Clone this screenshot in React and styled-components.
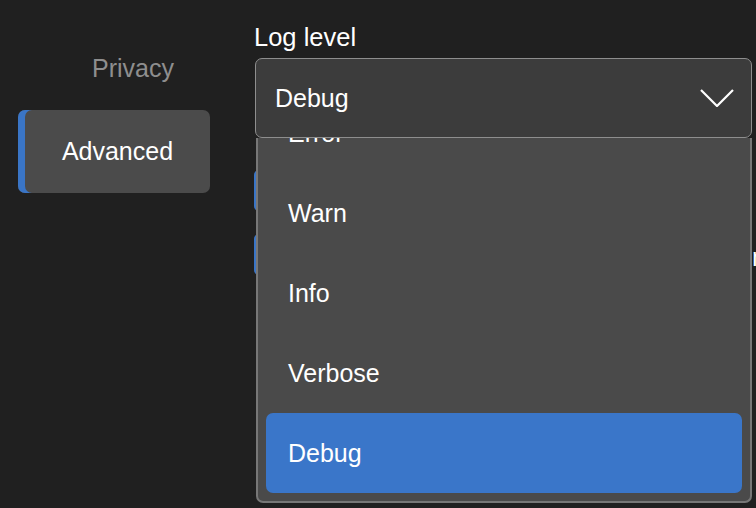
import React, { useEffect, useRef } from "react";
import styled, { createGlobalStyle } from "styled-components";

const Global = createGlobalStyle`
  html, body { margin: 0; padding: 0; background: #202020; overflow: hidden; }
  body { font-family: "Liberation Sans", Arial, Helvetica, sans-serif; color: #fff; }
`;

const Page = styled.div`
  display: flex;
  width: 756px;
  height: 508px;
  background: #202020;
  overflow: hidden;
`;

const Sidebar = styled.nav`
  display: flex;
  flex-direction: column;
  padding: 27px 0 0 18px;
  width: 192px;
  flex-shrink: 0;
`;

const NavItem = styled.div`
  height: 83px;
  display: flex;
  align-items: center;
  justify-content: center;
  box-sizing: border-box;
  font-size: 25px;
  border-radius: 7px;
  padding-left: ${(p) => (p.$active ? "7px" : "38px")};
  color: ${(p) => (p.$active ? "#ffffff" : "#8e8e8e")};
  background: ${(p) => (p.$active ? "#4b4b4b" : "transparent")};
  box-shadow: ${(p) => (p.$active ? "inset 7px 0 0 #3a75c6" : "none")};
`;

const Main = styled.main`
  flex: 1;
  display: flex;
  flex-direction: column;
  margin-left: 44px;
  margin-right: 4px;
  min-width: 0;
`;

const Label = styled.div`
  font-size: 25.5px;
  line-height: 28px;
  margin-top: 23px;
  margin-bottom: 7px;
`;

const SelectWrap = styled.div`
  position: relative;
  margin-left: 1px;
`;

const SelectBox = styled.div`
  height: 80px;
  box-sizing: border-box;
  display: flex;
  align-items: center;
  justify-content: space-between;
  padding: 0 17px 0 19px;
  background: #3c3c3c;
  border: 1.5px solid #8e8e8e;
  border-radius: 7px;
  font-size: 25px;
`;

const Menu = styled.div`
  position: absolute;
  top: 100%;
  left: 1px;
  right: 0;
  height: 365px;
  box-sizing: border-box;
  background: #4a4a4a;
  border: 2px solid #777777;
  border-top: none;
  border-radius: 0 0 7px 7px;
  overflow: hidden;
  z-index: 2;
`;

const MenuScroll = styled.div`
  height: 100%;
  overflow: hidden;
  box-sizing: border-box;
`;

const MenuList = styled.div`
  display: flex;
  flex-direction: column;
  padding: 8px;
`;

const MenuItem = styled.div`
  height: 80px;
  display: flex;
  align-items: center;
  padding-left: 22px;
  font-size: 25px;
  border-radius: 7px;
  background: ${(p) => (p.$selected ? "#3a76c9" : "transparent")};
`;

const Rows = styled.div`
  display: flex;
  flex-direction: column;
  gap: 23px;
  margin-top: 32px;
`;

const Row = styled.div`
  display: flex;
  align-items: center;
  justify-content: space-between;
  height: 41px;
`;

const Toggle = styled.div`
  width: 200px;
  height: 41px;
  border-radius: 5px;
  background: #3c3c3c;
  box-shadow: inset 3px 0 0 #3a75c6;
`;

const RowText = styled.span`
  font-size: 25px;
  color: #fff;
  margin-right: -14px;
  margin-top: 6px;
`;

const Chevron = () => (
  <svg width="34" height="18" viewBox="0 0 34 18" fill="none">
    <polyline points="1,1 17,17 33,1" stroke="#ffffff" strokeWidth="2.2" />
  </svg>
);

const levels = ["Error", "Warn", "Info", "Verbose", "Debug"];

export default function App() {
  const scrollRef = useRef(null);
  useEffect(() => {
    if (scrollRef.current) scrollRef.current.scrollTop = 53;
  }, []);
  return (
    <>
      <Global />
      <Page>
        <Sidebar>
          <NavItem>Privacy</NavItem>
          <NavItem $active>Advanced</NavItem>
        </Sidebar>
        <Main>
          <Label>Log level</Label>
          <SelectWrap>
            <SelectBox>
              <span>Debug</span>
              <Chevron />
            </SelectBox>
            <Menu>
              <MenuScroll ref={scrollRef}>
                <MenuList>
                  {levels.map((l) => (
                    <MenuItem key={l} $selected={l === "Debug"}>
                      {l}
                    </MenuItem>
                  ))}
                </MenuList>
              </MenuScroll>
            </Menu>
          </SelectWrap>
          <Rows>
            <Row>
              <Toggle />
            </Row>
            <Row>
              <Toggle />
              <RowText>n</RowText>
            </Row>
          </Rows>
        </Main>
      </Page>
    </>
  );
}
